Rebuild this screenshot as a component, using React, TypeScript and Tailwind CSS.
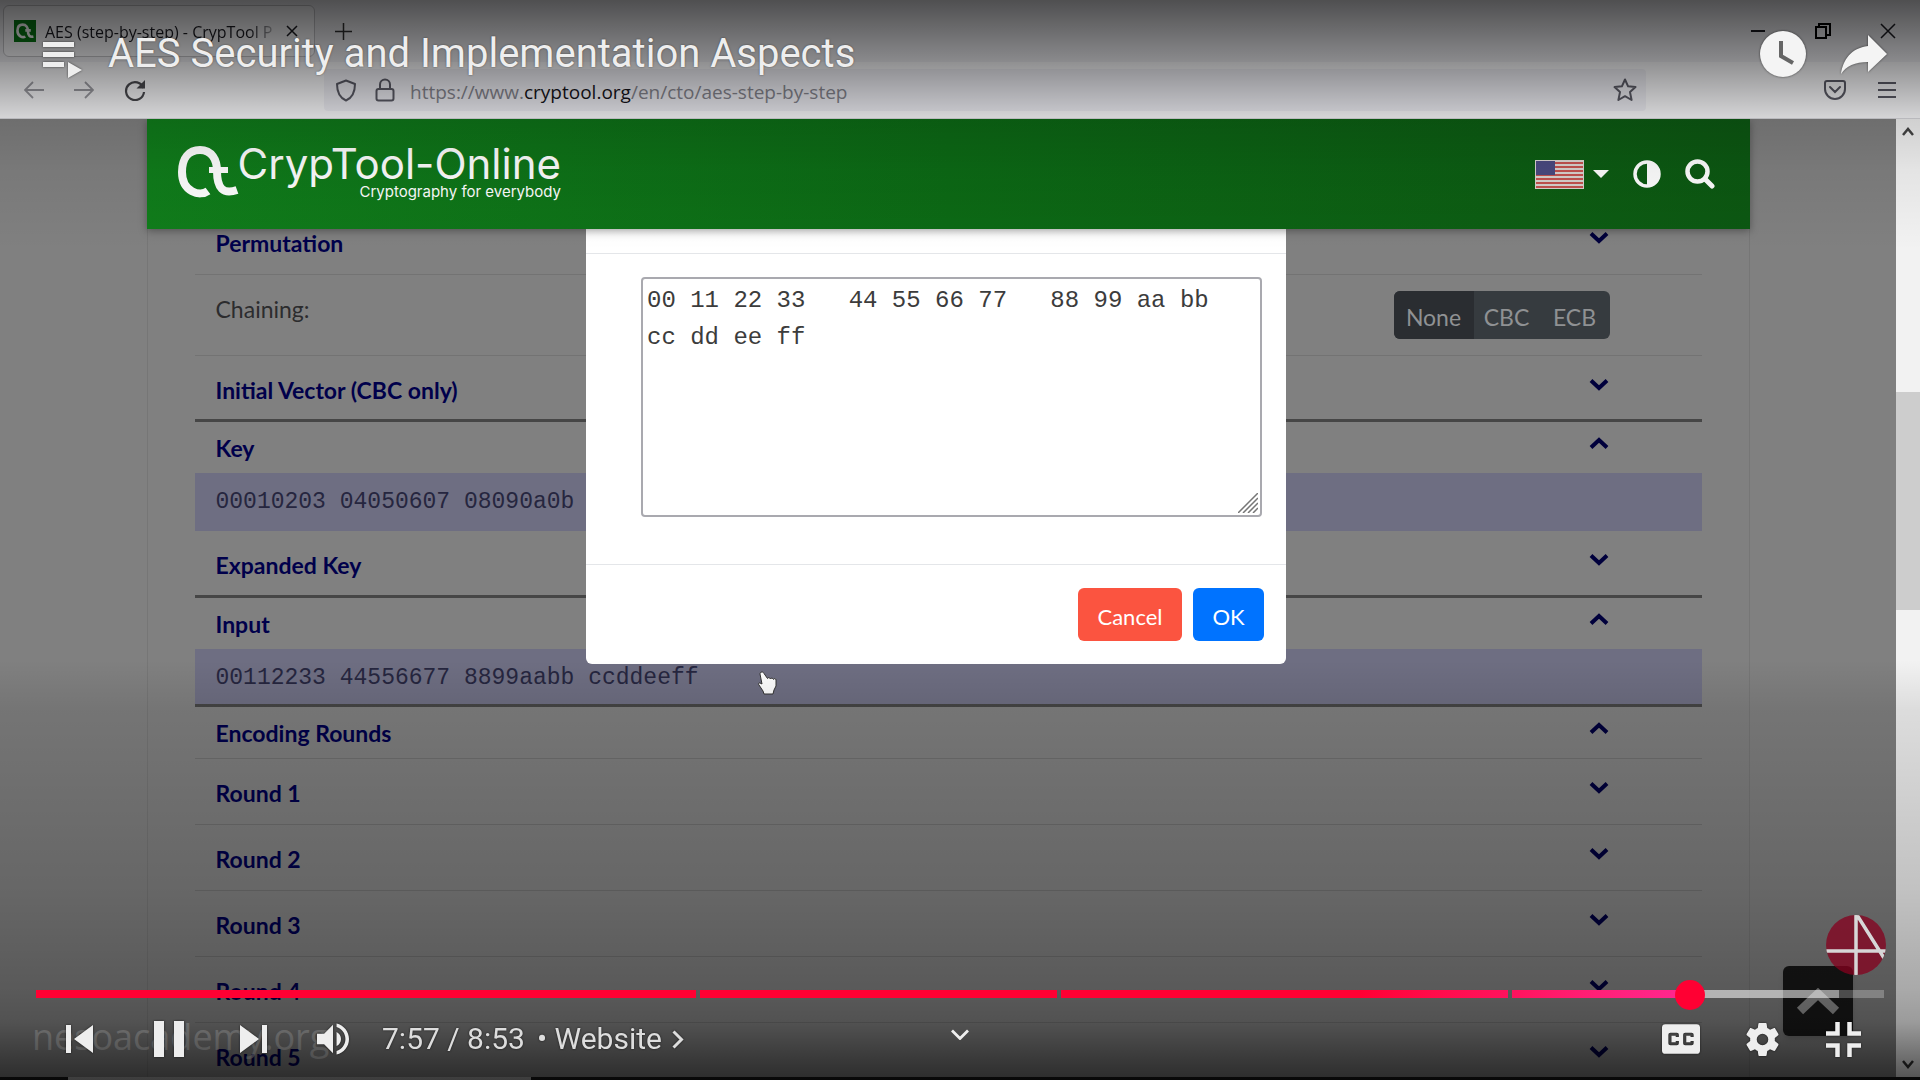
import React from "react";

type SectionProps = {
  title: string;
  open?: boolean;
  className: string;
};

function Chevron({ up }: { up?: boolean }) {
  return (
    <svg className="mt-[3px] h-3 w-5 shrink-0 text-[#00003c]" viewBox="0 0 20 12" fill="none" stroke="currentColor" strokeWidth="4">
      <path d={up ? "M2 10.5 10 3l8 7.5" : "M2 1.500 10 9l8-7.500"} />
    </svg>
  );
}

function Section({ title, open, className }: SectionProps) {
  return (
    <button
      aria-expanded={!!open}
      className={"flex w-full items-start justify-between pr-[93px] pl-[21px] text-left text-[23px] leading-7 font-bold text-[#00004b] " + className}
    >
      <span>{title}</span>
      <Chevron up={open} />
    </button>
  );
}

function HexRow({ children, className }: { children: React.ReactNode; className: string }) {
  return (
    <div
      className={
        "bg-[#6e6e82] pt-[3px] pl-[21px] font-['Liberation_Mono',monospace] text-[23px] whitespace-pre text-[#26263f] " + className
      }
    >
      {children}
    </div>
  );
}

function Browser() {
  return (
    <header className="relative shrink-0 bg-[#f0f0f4] font-['Open_Sans',sans-serif] text-[#1b1b22]">
      <div className="flex h-[62px] items-start bg-[#f0f0f4] pt-[5px] pr-6 pl-[3px]">
        <div className="flex h-[52px] w-[312px] items-center rounded-md border border-[#c4c4c8] bg-[#fafafd] pr-4 pl-[10px]">
          <svg className="size-[22px] bg-[#077a14]" viewBox="-8 -12 76 76" fill="none" stroke="#fff" strokeWidth="9">
            <path d="M31 45C22 51 4 44 4 25 4 12 11 4 22 4 34 4 40 14 40 25 40 40 46 48 59 45M31 24H50" />
          </svg>
          <span className="ml-[9px] flex-1 overflow-hidden [mask-image:linear-gradient(to_right,#000_86%,transparent)] pt-[2px] text-base whitespace-nowrap">
            AES (step-by-step) - CrypTool P
          </span>
          <button aria-label="Close tab" className="ml-1">
            <svg className="size-3" viewBox="0 0 12 12" stroke="currentColor" strokeWidth="1.500">
              <path d="M1 1l10 10M11 1 1 11" />
            </svg>
          </button>
        </div>
        <button aria-label="New tab" className="mt-[18px] ml-5">
          <svg className="size-[17px]" viewBox="0 0 17 17" stroke="#333" strokeWidth="1.500">
            <path d="M8.500 0v17M0 8.500h17" />
          </svg>
        </button>
        <div className="mt-[18px] ml-auto flex items-center gap-[49px]">
          <button aria-label="Minimize">
            <svg className="size-4" viewBox="0 0 16 16" stroke="currentColor" strokeWidth="2">
              <path d="M1 8h14" />
            </svg>
          </button>
          <button aria-label="Restore">
            <svg className="size-4" viewBox="0 0 16 16" fill="none" stroke="#000" strokeWidth="2">
              <path d="M1 4h10v11H1zM4 4V1h11v11h-4" />
            </svg>
          </button>
          <button aria-label="Close window">
            <svg className="size-4" viewBox="0 0 16 16" stroke="currentColor" strokeWidth="1.500">
              <path d="M1 1l14 14M15 1 1 15" />
            </svg>
          </button>
        </div>
      </div>
      <div className="flex h-[57px] items-center border-b border-[#d8d8dc] bg-[#f9f9fb] pr-6 pl-6">
        <div className="flex w-[300px] items-center gap-[30px]">
          <button aria-label="Back">
            <svg className="size-5" viewBox="0 0 20 20" fill="none" stroke="#9c9ca2" strokeWidth="1.800">
              <path d="M20 10H1M9 2l-8 8 8 8" />
            </svg>
          </button>
          <button aria-label="Forward">
            <svg className="size-5" viewBox="0 0 20 20" fill="none" stroke="#9c9ca2" strokeWidth="1.800">
              <path d="M0 10h19M11 2l8 8-8 8" />
            </svg>
          </button>
          <button aria-label="Reload">
            <svg className="size-[22px]" viewBox="0 0 22 22" fill="none" stroke="#4a4a4f" strokeWidth="2.200">
              <path d="M19.500 9A9 9 0 1 0 20 13" />
              <path d="M21 1v8.500h-8.500z" fill="#4a4a4f" stroke="none" />
            </svg>
          </button>
        </div>
        <div className="flex h-[42px] flex-1 items-center rounded bg-[#eeeef4] pr-[9px] pl-[11px]">
          <svg className="h-[23px] w-[22px]" viewBox="0 0 22 23" fill="none" stroke="#5b5b66" strokeWidth="2">
            <path d="M11 1.500 20 5c0 8-2 13.500-9 16.500C4 18.500 2 13 2 5z" strokeLinejoin="round" />
          </svg>
          <svg className="ml-[18px] h-6 w-5" viewBox="0 0 20 24" fill="none" stroke="#5b5b66" strokeWidth="2">
            <rect x="1.500" y="11" width="17" height="11.500" rx="2" />
            <path d="M5 11V6.500a5 5 0 0 1 10 0V11" />
          </svg>
          <a href="#" className="ml-[15px] pt-1 text-[19px] whitespace-nowrap text-[#85858e]">
            https://www.<span className="text-[#15141a]">cryptool.org</span>/en/cto/aes-step-by-step
          </a>
          <button aria-label="Bookmark" className="ml-auto">
            <svg className="size-6" viewBox="0 0 24 24" fill="none" stroke="#5b5b66" strokeWidth="2" strokeLinejoin="round">
              <path d="M12 1.500l3.100 6.800 7.400.800-5.500 5 1.600 7.900L12 18.200 5.400 22 7 14.100l-5.500-5 7.400-.800z" />
            </svg>
          </button>
        </div>
        <div className="ml-[178px] flex items-center gap-8">
          <button aria-label="Pocket">
            <svg className="h-5 w-[22px]" viewBox="0 0 22 20" fill="none" stroke="#5b5b66" strokeWidth="2" strokeLinecap="round">
              <path d="M3 1h16a2 2 0 0 1 2 2v6a10 10 0 0 1-20 0V3a2 2 0 0 1 2-2zM6 7l5 5 5-5" />
            </svg>
          </button>
          <button aria-label="Menu">
            <svg className="h-4 w-[18px]" viewBox="0 0 18 16" stroke="#5b5b66" strokeWidth="2">
              <path d="M0 1h18M0 8h18M0 15h18" />
            </svg>
          </button>
        </div>
      </div>
    </header>
  );
}

function SiteHeader() {
  return (
    <div className="absolute inset-x-0 top-0 z-20 pr-6">
      <div className="mx-auto flex h-[110px] w-full max-w-[1603px] items-center justify-between bg-linear-to-r from-[#107d1b] via-[#0c6a15] to-[#0c5812] pr-[35px] pl-[31px] text-white shadow-[0_2px_8px_rgba(0,0,0,0.35)]">
        <a href="#" className="flex items-start">
          <svg className="h-[52px] w-[62px]" viewBox="0 0 62 52" fill="none" stroke="currentColor" strokeWidth="8">
            <path d="M30 45C22 51 4 46 4 26 4 12 11 4 22 4 34 4 39 14 39 25 39 42 45 49 59 44" />
            <path d="M31 24H50" strokeWidth="6" />
          </svg>
          <span className="-ml-0.5 flex flex-col items-end font-['Inter',sans-serif]">
            <span className="text-[42px] leading-9">CrypTool-Online</span>
            <span className="text-[15px] leading-5">Cryptography for everybody</span>
          </span>
        </a>
        <div className="flex items-center">
          <button aria-label="Language" className="flex items-center gap-[9px]">
            <svg className="h-[29px] w-[49px]" viewBox="0 0 49 29">
              <rect width="49" height="29" fill="#d9d3cf" />
              <path d="M1 3h47M1 7h47M1 11h47M1 15h47M1 19h47M1 23h47M1 27h47" stroke="#c4524f" strokeWidth="2" />
              <rect x="1" y="1" width="19" height="14" fill="#4a4a80" />
            </svg>
            <svg className="h-2 w-4" viewBox="0 0 16 8" fill="currentColor">
              <path d="M0 0h16L8 8z" />
            </svg>
          </button>
          <button aria-label="Contrast" className="ml-6">
            <svg className="size-7" viewBox="0 0 28 28" fill="none" stroke="currentColor" strokeWidth="3.500">
              <circle cx="14" cy="14" r="12" />
              <path d="M14 2a12 12 0 0 1 0 24z" fill="currentColor" stroke="none" />
            </svg>
          </button>
          <button aria-label="Search" className="ml-6">
            <svg className="size-[30px]" viewBox="0 0 30 30" fill="none" stroke="currentColor" strokeWidth="4.500">
              <circle cx="12.500" cy="12.500" r="10" />
              <path d="M20 20l7 7" strokeLinecap="round" strokeWidth="5" />
            </svg>
          </button>
        </div>
      </div>
    </div>
  );
}

function Dialog() {
  return (
    <div className="absolute inset-x-0 top-[110px] z-10 flex justify-center pr-12">
      <div role="dialog" aria-label="Input" className="w-[700px] rounded-b-md bg-white text-[22px]">
        <div className="h-[25px] border-b border-[#e4e6e9]" />
        <div className="pt-[23px] pr-6 pb-[47px] pl-[55px]">
          <div className="relative">
            <textarea
              aria-label="Input bytes"
              className="block h-60 w-full resize-none overflow-hidden rounded-sm border-2 border-[#a9a9af] bg-white pt-[3px] pr-8 pl-1 font-['Liberation_Mono',monospace] text-2xl leading-[37px] text-[#3c3c3c] outline-none"
              defaultValue="00 11 22 33   44 55 66 77   88 99 aa bb cc dd ee ff"
            />
            <svg className="absolute right-1 bottom-1 size-5" viewBox="0 0 20 20" stroke="#777" strokeWidth="1.500">
              <path d="M0 20 20 0M5 20 20 5M10 20 20 10M15 20l5-5" />
            </svg>
          </div>
        </div>
        <div className="flex justify-end gap-[11px] border-t border-[#e4e6e9] pt-[23px] pr-[22px] pb-[23px]">
          <button className="h-[53px] w-[104px] rounded-md bg-[#fb5440] pt-[3px] text-white">Cancel</button>
          <button className="h-[53px] w-[71px] rounded-md bg-[#0073ff] pt-[3px] text-white">OK</button>
        </div>
      </div>
    </div>
  );
}

function Page() {
  return (
    <main className="relative flex min-h-0 flex-1 overflow-hidden bg-[#808080] pt-[110px] font-['Lato',sans-serif]">
      <SiteHeader />
      <Dialog />
      <div className="flex-1">
        <div className="mx-auto h-full w-full max-w-[1603px] border-x border-[#767676] pr-[47px] pl-[47px]">
          <Section title="Permutation" className="border-b border-[#737373] pb-[17px]" />
          <div className="flex h-[81px] items-start justify-between border-b border-[#737373] pt-4 pr-[92px] pl-[21px] text-[23px]">
            <span className="leading-9 text-[#2c2c2e]">Chaining:</span>
            <div className="flex h-12 overflow-hidden rounded-md bg-[#363b3f] text-[#8f9193]">
              <button className="w-20 bg-[#2a2d31] pt-1">None</button>
              <button className="w-[66px] pt-1">CBC</button>
              <button className="w-[70px] pt-1">ECB</button>
            </div>
          </div>
          <Section title="Initial Vector (CBC only)" className="border-b-3 border-[#464646] pt-5 pb-[15px]" />
          <Section title="Key" open className="pt-3 pb-[11px]" />
          <HexRow className="h-[58px] leading-[52px]">00010203 04050607 08090a0b 0c0d0e0f</HexRow>
          <Section title="Expanded Key" className="border-b-3 border-[#464646] pt-5 pb-4" />
          <Section title="Input" open className="pt-3 pb-[11px]" />
          <HexRow className="border-b-3 border-[#464646] leading-[52px]">00112233 44556677 8899aabb ccddeeff</HexRow>
          <Section title="Encoding Rounds" open className="border-b border-[#707070] pt-3 pb-[11px]" />
          <Section title="Round 1" className="border-b border-[#707070] pt-5 pb-[17px]" />
          <Section title="Round 2" className="border-b border-[#707070] pt-5 pb-[17px]" />
          <Section title="Round 3" className="border-b border-[#707070] pt-5 pb-[17px]" />
          <Section title="Round 4" className="border-b border-[#707070] pt-5 pb-[17px]" />
          <Section title="Round 5" className="pt-5 pb-[17px]" />
        </div>
      </div>
      <div className="-mt-[110px] flex w-6 flex-col items-center bg-[#f2f2f2]">
        <svg className="mt-2 h-[9px] w-3" viewBox="0 0 12 9" fill="none" stroke="#444" strokeWidth="2.500">
          <path d="M1 8l5-6 5 6" />
        </svg>
        <div className="grow-[256]" />
        <div className="w-full grow-[218] bg-[#cdcdcd]" />
        <div className="grow-[450]" />
        <svg className="mb-2 h-[9px] w-3" viewBox="0 0 12 9" fill="none" stroke="#333" strokeWidth="2.500">
          <path d="M1 1l5 6 5-6" />
        </svg>
      </div>
      <button aria-label="Back to top" className="absolute right-[67px] bottom-[41px] flex size-[70px] items-center justify-center rounded-md bg-[#181818] shadow-md">
        <svg className="h-[27px] w-11" viewBox="0 0 44 27" fill="none" stroke="#909090" strokeWidth="9">
          <path d="M4 23 22 6l18 17" />
        </svg>
      </button>
      <span className="absolute bottom-5 left-8 font-['Open_Sans',sans-serif] text-4xl text-[#d0d0d0]/60">nesoacademy.org</span>
      <svg className="absolute top-[552px] left-[758px] h-6 w-5" viewBox="0 0 20 24" fill="#fff" stroke="#333" strokeWidth="1">
        <path d="M4 1c-1.500 0-2 1-2 2l2 10-2-1c-1.500-.500-2 1-1 2l4 6 1 3h9l1-4 2-4V9c0-1.500-2-2-2.500-.500C15 7 13 6.500 12.500 8 12 6.500 10 6 9.500 7.500L6 2.500C5.600 1.500 5 1 4 1z" />
      </svg>
    </main>
  );
}

function Segment({ grow, children }: { grow: string; children: React.ReactNode }) {
  return <div className={"flex h-2 basis-0 " + grow}>{children}</div>;
}

function Player() {
  return (
    <div className="absolute inset-0 z-30 flex flex-col justify-between bg-[linear-gradient(to_bottom,rgba(0,0,0,0.67),rgba(0,0,0,0.43)_60px,rgba(0,0,0,0.14)_119px,rgba(0,0,0,0.06)_170px,transparent_250px,transparent_calc(100%-420px),rgba(0,0,0,0.09)_calc(100%-370px),rgba(0,0,0,0.2)_calc(100%-190px),rgba(0,0,0,0.3)_calc(100%-90px),rgba(0,0,0,0.36)_calc(100%-58px),rgba(0,0,0,0.66)_100%)] font-['Roboto',sans-serif] text-[#eee]">
      <div className="flex items-start pt-[30px] pr-[33px] pl-[42px]">
        <button aria-label="Playlist" className="mt-[11px] drop-shadow-[0_0_1px_rgba(0,0,0,0.6)]">
          <svg className="h-10 w-[42px]" viewBox="0 0 42 40" fill="currentColor">
            <path d="M1 1h31v5H1zM1 11h31v5H1zM1 21h21v5H1zM26 21v16l14-8z" />
          </svg>
        </button>
        <a href="#" className="ml-6 text-[40px] leading-12 [text-shadow:0_0_2px_rgba(0,0,0,0.5)]">
          AES Security and Implementation Aspects
        </a>
        <div className="ml-auto flex items-start gap-[34px]">
          <button aria-label="Watch later" className="mt-[1px] drop-shadow-[0_0_1px_rgba(0,0,0,0.6)]">
            <svg className="size-[46px]" viewBox="0 0 46 46">
              <circle cx="23" cy="23" r="23" fill="#f4f4f4" />
              <path d="M21 10v15l12 7" fill="none" stroke="#666" strokeWidth="4" />
            </svg>
          </button>
          <button aria-label="Share" className="mt-[5px] drop-shadow-[0_0_1px_rgba(0,0,0,0.6)]">
            <svg className="h-[40px] w-[47px]" viewBox="0 0 47 40" fill="#f4f4f4">
              <path d="M28 0l19 19-19 18V27C15 27 6 31 1 39 3 25 11 13 28 11z" />
            </svg>
          </button>
        </div>
      </div>

      <div>
        <div className="mb-[15px] flex justify-end pr-[34px]">
          <svg aria-label="Channel watermark" className="size-[60px] opacity-75" viewBox="0 0 60 60">
            <defs>
              <clipPath id="disc">
                <circle cx="30" cy="30" r="30" />
              </clipPath>
            </defs>
            <g clipPath="url(#disc)">
              <rect width="60" height="60" fill="#86001e" />
              <path d="M30 0v60M0 36h60M31 0l27 43" stroke="#fff" strokeWidth="3.500" />
            </g>
          </svg>
        </div>
        <div className="relative mx-9 flex gap-1">
          <Segment grow="grow-[660]">
            <div className="flex-1 bg-[#ff0033]" />
          </Segment>
          <Segment grow="grow-[356]">
            <div className="flex-1 bg-[#ff0033]" />
          </Segment>
          <Segment grow="grow-[447]">
            <div className="flex-1 bg-linear-to-r from-[#ff0033] from-67% to-[#ff125d]" />
          </Segment>
          <Segment grow="grow-[372]">
            <div className="w-[48%] bg-linear-to-r from-[#ff125d] to-[#ff2791]" />
            <div className="w-[40%] bg-white/55" />
            <div className="flex-1 bg-white/25" />
          </Segment>
          <div className="absolute top-[-10px] left-[89.500%] size-[30px] -translate-x-1/2 rounded-full bg-[#ff0033]" />
          <input aria-label="Seek" type="range" min={0} max={533} defaultValue={477} className="absolute inset-x-0 -top-2 h-6 w-full cursor-pointer opacity-0" />
        </div>
        <div className="flex h-[82px] items-center justify-between px-[59px]">
          <div className="flex flex-1 items-center drop-shadow-[0_0_1px_rgba(0,0,0,0.6)]">
            <button aria-label="Previous" className="ml-[7px]">
              <svg className="h-7 w-[27px]" viewBox="0 0 27 28" fill="currentColor">
                <path d="M0 0h5v28H0zM27 0v28L8 14z" />
              </svg>
            </button>
            <button aria-label="Pause" className="ml-[61px]">
              <svg className="h-9 w-[30px]" viewBox="0 0 30 36" fill="currentColor">
                <path d="M0 0h10v36H0zM20 0h10v36H20z" />
              </svg>
            </button>
            <button aria-label="Next" className="ml-14">
              <svg className="h-7 w-[27px]" viewBox="0 0 27 28" fill="currentColor">
                <path d="M22 0h5v28h-5zM0 0v28l19-14z" />
              </svg>
            </button>
            <button aria-label="Mute" className="ml-[50px]">
              <svg className="h-8 w-8" viewBox="8 9 18 18" fill="currentColor">
                <path d="M8 21h4l5 5V10l-5 5H8zM19 14v8c1.480-.680 2.500-2.230 2.500-4s-1.020-3.260-2.500-4zM19 11.290c2.890.860 5 3.540 5 6.710s-2.110 5.850-5 6.710v2.060c4.010-.910 7-4.490 7-8.770s-2.990-7.860-7-8.770z" />
              </svg>
            </button>
            <span className="ml-[33px] text-[30px] leading-9 text-[#ddd]">7:57 / 8:53</span>
            <button className="ml-3 flex items-center text-[30px] leading-9 text-[#ddd]">
              <span>• Website</span>
              <svg className="ml-[10px] h-[19px] w-3" viewBox="0 0 12 19" fill="none" stroke="currentColor" strokeWidth="3">
                <path d="M1.500 1.500l8 8-8 8" />
              </svg>
            </button>
          </div>
          <button aria-label="More" className="mb-[10px]">
            <svg className="h-[11px] w-[18px]" viewBox="0 0 18 11" fill="none" stroke="currentColor" strokeWidth="2.800">
              <path d="M1 1.500l8 8 8-8" />
            </svg>
          </button>
          <div className="flex flex-1 items-center justify-end drop-shadow-[0_0_1px_rgba(0,0,0,0.6)]">
            <button aria-label="Subtitles">
              <svg className="h-[30px] w-[38px]" viewBox="9 11 18 14" fill="currentColor" fillRule="evenodd">
                <path d="M10.600 11a1.600 1.600 0 0 0-1.600 1.600v10.800a1.600 1.600 0 0 0 1.600 1.600h14.800a1.600 1.600 0 0 0 1.600-1.600V12.600a1.600 1.600 0 0 0-1.600-1.600zM17 17h-1.500v-.500h-2v3h2V19H17v1a1 1 0 0 1-1 1h-3a1 1 0 0 1-1-1v-4a1 1 0 0 1 1-1h3a1 1 0 0 1 1 1zM24 17h-1.500v-.500h-2v3h2V19H24v1a1 1 0 0 1-1 1h-3a1 1 0 0 1-1-1v-4a1 1 0 0 1 1-1h3a1 1 0 0 1 1 1z" />
              </svg>
            </button>
            <button aria-label="Settings" className="ml-[46px]">
              <svg className="size-[33px]" viewBox="10 10 16 16" fill="currentColor">
                <path d="m23.940 18.780c.030-.250.050-.510.050-.780s-.020-.520-.050-.780l1.680-1.320c.150-.120.190-.330.090-.510l-1.600-2.760c-.090-.170-.310-.240-.480-.170l-1.990.800c-.410-.320-.860-.580-1.350-.780l-.300-2.120c-.020-.190-.190-.330-.390-.330h-3.200c-.200 0-.360.140-.390.330l-.300 2.120c-.480.200-.930.470-1.350.780l-1.990-.800c-.180-.070-.390 0-.480.170l-1.600 2.760c-.100.170-.050.390.090.510l1.680 1.320c-.030.250-.050.520-.050.780s.020.520.050.780l-1.680 1.320c-.150.120-.190.330-.090.510l1.600 2.760c.090.170.310.240.480.170l1.990-.800c.410.320.860.580 1.350.780l.300 2.120c.020.190.190.330.390.330h3.200c.200 0 .360-.140.390-.330l.300-2.120c.480-.200.930-.470 1.350-.780l1.990.800c.180.070.390 0 .480-.170l1.600-2.760c.090-.170.050-.390-.090-.510zm-5.940 2.010a2.800 2.800 0 1 1 0-5.600 2.800 2.800 0 0 1 0 5.600z" />
              </svg>
            </button>
            <button aria-label="Exit full screen" className="ml-[47px]">
              <svg className="size-[35px]" viewBox="0 0 35 35" fill="none" stroke="currentColor" strokeWidth="4.500">
                <path d="M11.500 0v11.500H0M23.500 0v11.500H35M11.500 35V23.500H0M23.500 35V23.500H35" />
              </svg>
            </button>
          </div>
        </div>
      </div>
    </div>
  );
}

export default function App() {
  return (
    <div className="relative flex h-screen flex-col overflow-hidden bg-black">
      <Browser />
      <Page />
      <div className="flex h-[3px] shrink-0 bg-[#181818] pl-[68px]">
        <div className="w-1/4 bg-[#b0b0b0]" />
      </div>
      <Player />
    </div>
  );
}
